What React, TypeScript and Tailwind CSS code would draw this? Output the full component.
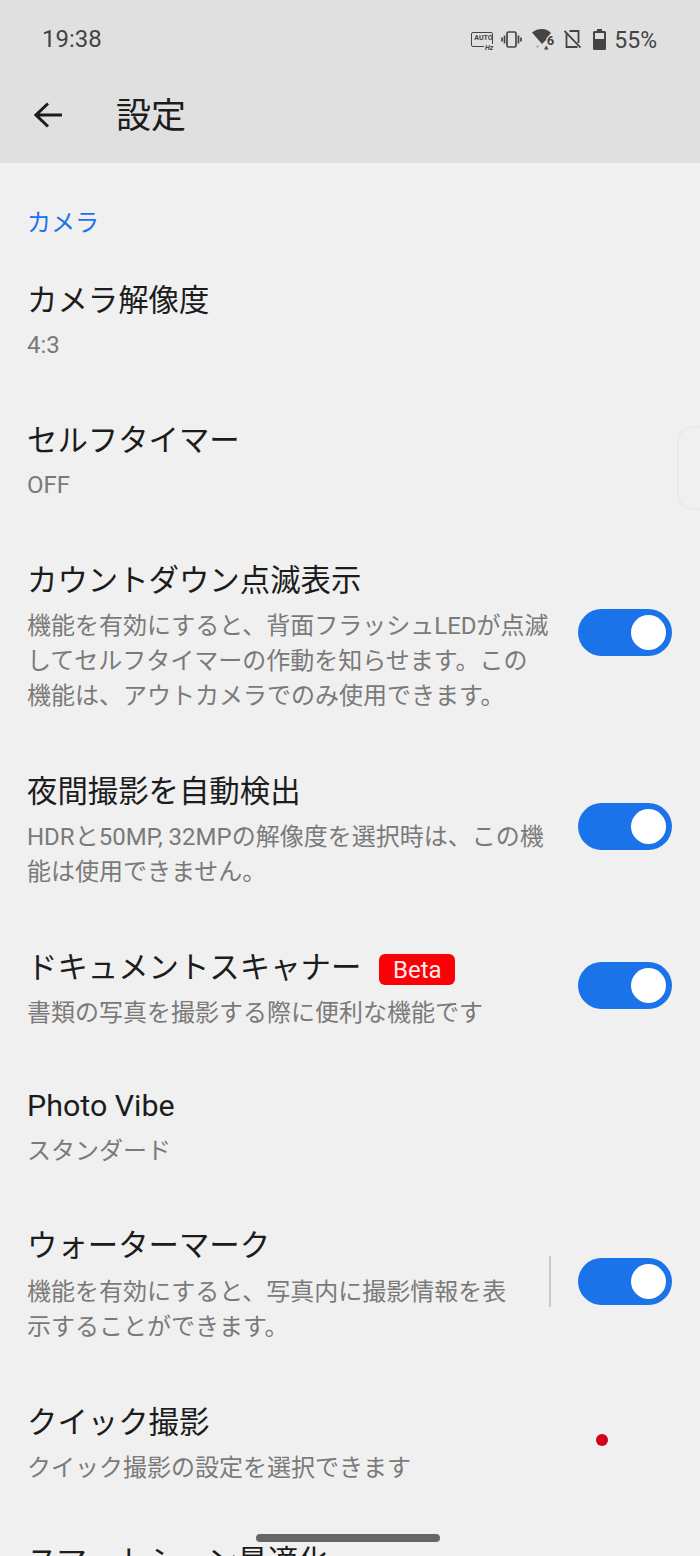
const FONT = "font-['Roboto','Noto_Sans_CJK_JP',sans-serif]";

interface RowProps {
  title: string;
  sub: string[];
  toggleTop?: string;
  divider?: boolean;
  beta?: boolean;
  subTop: string;
  bottom: string;
}

function Toggle({ top }: { top: string }) {
  return (
    <div className={`flex h-[47px] w-[94px] shrink-0 items-center justify-end self-start rounded-full bg-[#1a73e8] pr-[6px] ${top}`}>
      <div className="h-[35px] w-[35px] rounded-full bg-white" />
    </div>
  );
}

function Row({ title, sub, toggleTop, divider, beta, subTop, bottom }: RowProps) {
  return (
    <div className={`flex pl-[27px] pr-[28px] pt-[28px] ${bottom}`}>
      <div className="min-w-0 flex-1">
        <div className="flex h-[40px] items-center gap-[18px] text-[30.4px] leading-[40px] whitespace-nowrap text-[#1c1c1c]">
          <span>{title}</span>
          {beta && (
            <span className="mt-[3px] flex h-[31px] w-[76px] items-center justify-center rounded-[6px] bg-[#fb0007] text-[24px] leading-none text-[#ffe9e9]">
              Beta
            </span>
          )}
        </div>
        <div className={`text-[24px] leading-[35px] whitespace-nowrap text-[#7a7a7a] ${subTop}`}>
          {sub.map((line) => (
            <div key={line}>{line}</div>
          ))}
        </div>
      </div>
      {divider && <div className="mr-[27px] mt-[30px] h-[51px] w-[2px] shrink-0 self-start bg-[#c9c9c9]" />}
      {toggleTop && <Toggle top={toggleTop} />}
    </div>
  );
}

function StatusIcons() {
  return (
    <div className="flex items-center text-[#444]">
      {/* refresh rate */}
      <div className="relative mr-[8px] h-[15px] w-[22px] rounded-[2px] border-[1.5px] border-[#444]">
        <span className="absolute left-[2px] top-[1px] text-[7px] leading-[8px] font-bold">AUTO</span>
        <span className="absolute -bottom-[6px] right-[-2px] bg-[#e0e0e0] px-[1px] text-[7px] leading-[8px] font-bold italic">Hz</span>
      </div>
      {/* vibrate */}
      <svg className="mr-[10px]" width="21" height="17" viewBox="0 0 21 17" fill="none" stroke="#444" strokeWidth="1.7">
        <rect x="6" y="1" width="9" height="15" rx="1.5" />
        <path d="M3.500 4.500v8M1 6.500v4M17.500 4.500v8M20 6.500v4" />
      </svg>
      {/* wifi with 6 */}
      <div className="relative mr-[10px] h-[21px] w-[22px]">
        <svg className="absolute left-0 top-0" width="22" height="21" viewBox="0 0 22 21">
          <path d="M0 3.500C3 1 6.500 0 10 0c3.500 0 6.500 1.300 9 4l-4.500 5-.5 2-4 4z" fill="#444" />
          <path d="M3.500 16.500h4l-2 3.500z" fill="#b5b5b5" />
          <path d="M12 20.500h4.500l-2.200-4z" fill="#444" />
        </svg>
        <span className="absolute right-0 top-[6px] text-[13px] leading-[12px] font-bold">6</span>
      </div>
      {/* no sim */}
      <svg className="mr-[12px]" width="17" height="18" viewBox="0 0 17 18" fill="none" stroke="#444" strokeWidth="1.8">
        <path d="M2.500 3.500v13.500h11M5.500 1h9v12" />
        <path d="M.5 1l16 16.500" />
      </svg>
      {/* battery */}
      <svg className="mr-[8px]" width="13" height="21" viewBox="0 0 13 21">
        <path d="M4 0h5v2h2.500A1.500 1.500 0 0 1 13 3.500v16a1.500 1.500 0 0 1-1.500 1.500h-10A1.500 1.500 0 0 1 0 19.500v-16A1.500 1.500 0 0 1 1.500 2H4z" fill="#444" />
        <rect x="2" y="4" width="9" height="6" fill="#e0e0e0" />
      </svg>
      <span className="mt-[2px] text-[23px] leading-none">55%</span>
    </div>
  );
}

export default function App() {
  return (
    <div className={`relative h-[1556px] w-[700px] overflow-hidden bg-[#f0f0f0] ${FONT}`}>
      <header className="h-[163px] bg-[#e0e0e0]">
        <div className="flex h-[78px] items-center justify-between pl-[42px] pr-[43px]">
          <span className="text-[24px] leading-none text-[#444]">19:38</span>
          <StatusIcons />
        </div>
        <div className="flex h-[74px] items-center pl-[34px]">
          <svg width="28" height="26" viewBox="0 0 28 26" fill="none" stroke="#1c1c1c" strokeWidth="3">
            <path d="M28 13H2M14 1.500L2 13l12 11.500" />
          </svg>
          <h1 className="ml-[54px] mt-[2px] text-[35px] leading-none font-normal text-[#1c1c1c]">設定</h1>
        </div>
      </header>

      <main>
        <div className="mt-[44px] pl-[27px] text-[24px] leading-[32px] text-[#1a73e8]">カメラ</div>
        <div className="mt-[14px]">
          <Row title="カメラ解像度" sub={["4:3"]} subTop="mt-[7px]" bottom="pb-[30px]" />
          <Row title="セルフタイマー" sub={["OFF"]} subTop="mt-[7px]" bottom="pb-[30px]" />
          <Row
            title="カウントダウン点滅表示"
            sub={["機能を有効にすると、背面フラッシュLEDが点滅", "してセルフタイマーの作動を知らせます。この", "機能は、アウトカメラでのみ使用できます。"]}
            toggleTop="mt-[48px]"
            subTop="mt-[8px]"
            bottom="pb-[30px]"
          />
          <Row
            title="夜間撮影を自動検出"
            sub={["HDRと50MP, 32MPの解像度を選択時は、この機", "能は使用できません。"]}
            toggleTop="mt-[31px]"
            subTop="mt-[8px]"
            bottom="pb-[30px]"
          />
          <Row
            title="ドキュメントスキャナー"
            sub={["書類の写真を撮影する際に便利な機能です"]}
            toggleTop="mt-[14px]"
            beta
            subTop="mt-[8px]"
            bottom="pb-[27px]"
          />
          <Row title="Photo Vibe" sub={["スタンダード"]} subTop="mt-[8px]" bottom="pb-[29px]" />
          <Row
            title="ウォーターマーク"
            sub={["機能を有効にすると、写真内に撮影情報を表", "示することができます。"]}
            toggleTop="mt-[32px]"
            divider
            subTop="mt-[9px]"
            bottom="pb-[30px]"
          />
          <Row title="クイック撮影" sub={["クイック撮影の設定を選択できます"]} subTop="mt-[8px]" bottom="pb-[28px]" />
          <div className="pl-[27px] pt-[28px] text-[30.4px] leading-[40px] whitespace-nowrap text-[#1c1c1c]">スマートシーン最適化</div>
        </div>
      </main>

      {/* edge panel handle */}
      <div className="absolute left-[677px] top-[426px] h-[84px] w-[40px] rounded-[16px] border-[2px] border-[#eaeaea]" />
      {/* recording dot */}
      <div className="absolute left-[596px] top-[1434px] h-[12px] w-[12px] rounded-full bg-[#d0021b]" />
      {/* home indicator */}
      <div className="absolute left-[256px] top-[1534px] h-[8px] w-[184px] rounded-full bg-[#666]" />
    </div>
  );
}
